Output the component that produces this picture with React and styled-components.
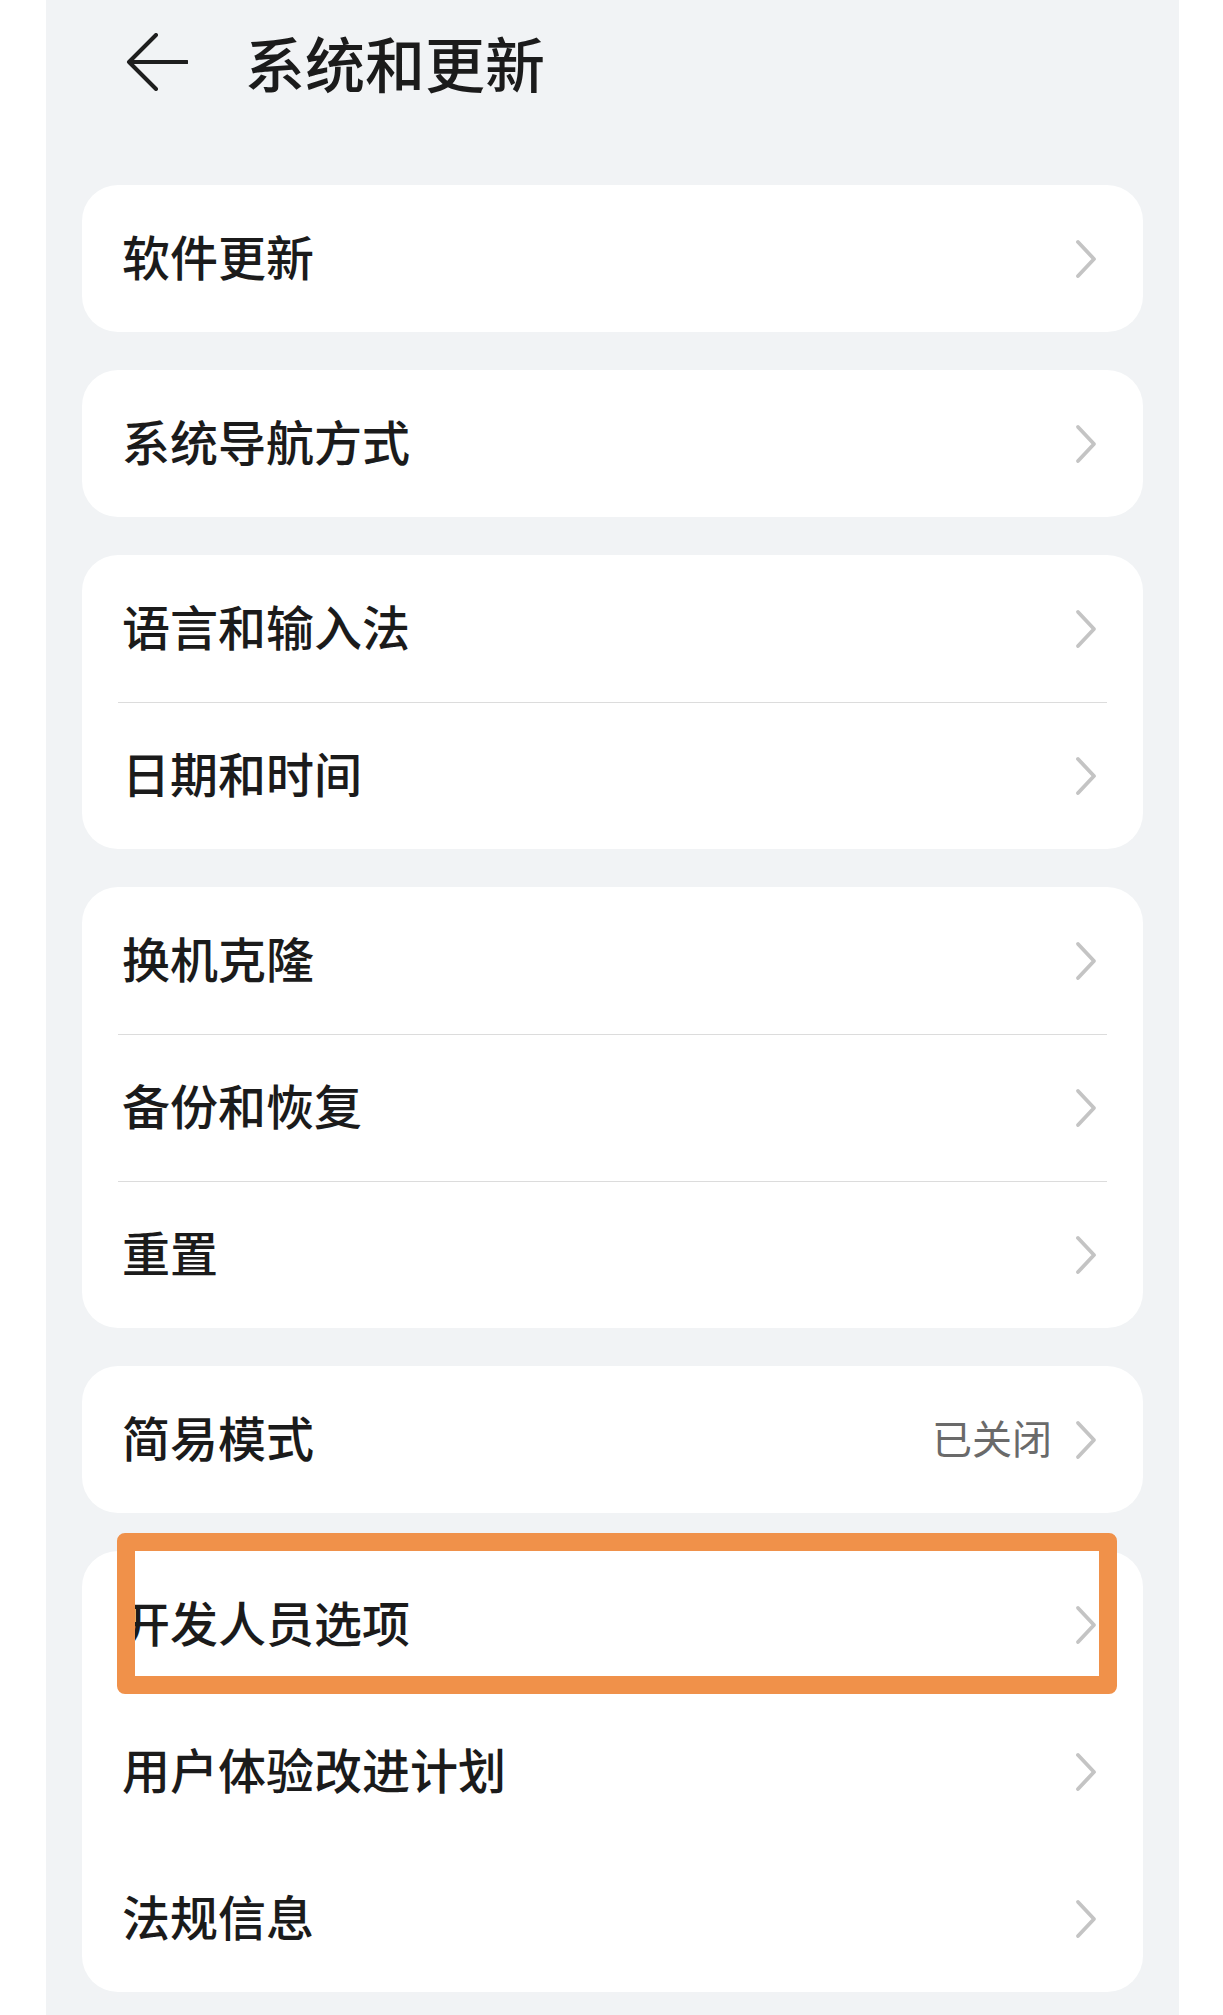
import styled, { createGlobalStyle } from "styled-components";

const GlobalStyle = createGlobalStyle`
  html, body {
    margin: 0;
    padding: 0;
    background: #ffffff;
  }
  body {
    font-family: "Noto Sans CJK SC", "Noto Sans", sans-serif;
    color: #1b1b1b;
  }
`;

const Screen = styled.div`
  padding: 0 44px 0 46px;
`;

const Panel = styled.div`
  background: #f1f3f5;
  min-height: 2015px;
  padding: 0 36px 24px;
  box-sizing: border-box;
`;

const Header = styled.div`
  height: 124px;
  padding-bottom: 6px;
  margin-bottom: 55px;
  display: flex;
  align-items: center;
  padding-left: 44px;
  gap: 57px;
`;

const BackButton = styled.button`
  width: 62px;
  height: 58px;
  padding: 0;
  border: none;
  background: none;
  display: flex;
  align-items: center;
  justify-content: center;
  cursor: pointer;
`;

const Title = styled.h1`
  margin: 0;
  font-size: 60px;
  line-height: 1.2;
  font-weight: 500;
  color: #1b1b1b;
`;

const List = styled.div`
  display: flex;
  flex-direction: column;
  gap: 38px;
`;

const Card = styled.div`
  position: relative;
  background: #ffffff;
  border-radius: 36px;
`;

const Row = styled.div`
  position: relative;
  height: 147px;
  box-sizing: border-box;
  display: flex;
  align-items: center;
  padding: 0 46px 6px 40px;

  & + &::before {
    content: "";
    display: ${(p) => (p.$plain ? "none" : "block")};
    position: absolute;
    top: 0;
    left: 36px;
    right: 36px;
    height: 1px;
    background: #dcdcdc;
  }
`;

const Label = styled.span`
  flex: 1;
  font-size: 48px;
  line-height: 1.2;
  font-weight: 500;
  color: #1b1b1b;
`;

const Value = styled.span`
  font-size: 40px;
  line-height: 1.2;
  color: #6a6a6a;
  margin-right: 23px;
`;

const ChevronBox = styled.span`
  display: flex;
  margin-top: 6px;
`;

const Highlight = styled.div`
  position: absolute;
  left: 35px;
  top: -18px;
  width: 1000px;
  height: 161px;
  box-sizing: border-box;
  border: 18px solid #f0914a;
  border-radius: 8px;
  pointer-events: none;
`;

const Chevron = () => (
  <ChevronBox>
    <svg width="22" height="40" viewBox="0 0 22 40" fill="none">
      <path
        d="M3 3 L19 20 L3 37"
        stroke="#c4c4c4"
        strokeWidth="3.8"
        strokeLinecap="round"
        strokeLinejoin="round"
      />
    </svg>
  </ChevronBox>
);

const BackArrow = () => (
  <svg width="62" height="58" viewBox="0 0 62 58" fill="none">
    <path
      d="M30 2 L3 29 L30 56 M3 29 H61"
      stroke="#1e1e1e"
      strokeWidth="4"
      strokeLinecap="round"
      strokeLinejoin="round"
    />
  </svg>
);

const groups = [
  [{ label: "软件更新" }],
  [{ label: "系统导航方式" }],
  [{ label: "语言和输入法" }, { label: "日期和时间" }],
  [{ label: "换机克隆" }, { label: "备份和恢复" }, { label: "重置" }],
  [{ label: "简易模式", value: "已关闭" }],
  [
    { label: "开发人员选项", marked: true },
    { label: "用户体验改进计划" },
    { label: "法规信息" },
  ],
];

function App() {
  return (
    <Screen>
      <GlobalStyle />
      <Panel>
        <Header>
          <BackButton aria-label="返回">
            <BackArrow />
          </BackButton>
          <Title>系统和更新</Title>
        </Header>
        <List>
          {groups.map((items, i) => (
            <Card key={i}>
              {items.map((item, j) => (
                <Row key={item.label} $plain={j > 0 && items[j - 1].marked}>
                  <Label>{item.label}</Label>
                  {item.value && <Value>{item.value}</Value>}
                  <Chevron />
                </Row>
              ))}
              {items.some((item) => item.marked) && <Highlight />}
            </Card>
          ))}
        </List>
      </Panel>
    </Screen>
  );
}

export default App;
